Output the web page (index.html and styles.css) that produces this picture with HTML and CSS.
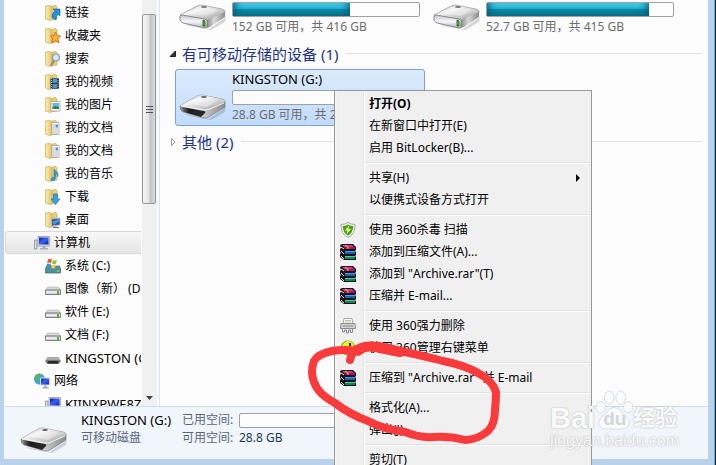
FILE: index.html
```html
<!DOCTYPE html>
<html lang="zh-CN">
<head>
    <meta charset="UTF-8">
    <meta name="viewport" content="width=device-width, initial-scale=1.0">
    <title>计算机</title>
    <link rel="stylesheet" href="styles.css">
</head>
<body>
    <!-- icon sprites -->
    <svg class="sprites" width="0" height="0">
        <defs>
            <linearGradient id="metal" x1="0" y1="0" x2="1" y2="1">
                <stop offset="0" stop-color="#a9a9a9"/>
                <stop offset=".35" stop-color="#f4f4f4"/>
                <stop offset=".6" stop-color="#d2d2d2"/>
                <stop offset="1" stop-color="#9b9b9b"/>
            </linearGradient>
            <linearGradient id="side" x1="0" y1="0" x2="1" y2="0">
                <stop offset="0" stop-color="#8b8b8b"/>
                <stop offset=".4" stop-color="#d9d9d9"/>
                <stop offset="1" stop-color="#8a8a8a"/>
            </linearGradient>
            <linearGradient id="face" x1="0" y1="0" x2="0" y2="1">
                <stop offset="0" stop-color="#c4c4cc"/>
                <stop offset=".5" stop-color="#f5f5fa"/>
                <stop offset="1" stop-color="#b0b0b8"/>
            </linearGradient>
            <linearGradient id="hole" x1="0" y1="0" x2="1" y2="0">
                <stop offset="0" stop-color="#777"/>
                <stop offset=".3" stop-color="#1c1c1c"/>
                <stop offset="1" stop-color="#2c2c2c"/>
            </linearGradient>
            <linearGradient id="fold" x1="0" y1="0" x2="1" y2="0">
                <stop offset="0" stop-color="#fbf0b4"/>
                <stop offset="1" stop-color="#dfc264"/>
            </linearGradient>
            <linearGradient id="screen" x1="0" y1="0" x2="1" y2="1">
                <stop offset="0" stop-color="#0b1a9c"/>
                <stop offset=".5" stop-color="#3c62f0"/>
                <stop offset="1" stop-color="#0618a8"/>
            </linearGradient>
        </defs>

        <symbol id="drive" viewBox="0 0 48 28">
            <path d="M6 22L30 27L47 15L46 20L32 28L10 24Z" fill="#000" opacity=".15"/>
            <path d="M1 13L18 4Q20 3 23 3L43 7Q47 8 46 11L29 18L3 15Z" fill="url(#metal)" stroke="#8c8c8c" stroke-width=".6"/>
            <path d="M28 18L46 10V15L31 25L28 26Z" fill="url(#side)"/>
            <path d="M1 14Q1 13 3 13L26 17Q28 18 28 19V25Q28 26 26 26L4 21Q2 20 1 18Z" fill="url(#face)" stroke="#777" stroke-width=".8"/>
            <path d="M9 11L21 5L39 8L28 14Z" fill="#fff" opacity=".35"/>
            <ellipse cx="25" cy="5" rx="3" ry="1" fill="#777"/>
            <path d="M24 18L26 19V24L24 24Z" fill="#4fd320" stroke="#164c08" stroke-width=".8"/>
        </symbol>
        <symbol id="usb" viewBox="0 0 48 28">
            <path d="M6 22L30 27L47 15L46 20L32 28L10 24Z" fill="#000" opacity=".15"/>
            <path d="M1 14L18 4Q20 3 23 3L43 7Q47 8 46 10L46 15L30 25Q28 26 25 26L4 20Q1 19 1 14Z" fill="url(#side)" stroke="#777" stroke-width=".6"/>
            <path d="M1 14L18 4Q20 3 23 3L43 7Q47 8 46 10L31 17Q29 18 26 18Z" fill="url(#metal)"/>
            <path d="M3 15L25 19Q27 19 26 21L22 25L5 20Q3 19 3 15Z" fill="url(#hole)"/>
            <path d="M2 14L26 18Q29 18 31 17L45 11" fill="none" stroke="#fff" stroke-width="1" opacity=".8"/>
            <path d="M9 11L21 5L39 8L28 15Z" fill="#fff" opacity=".35"/>
            <ellipse cx="25" cy="5" rx="3" ry="1" fill="#666"/>
        </symbol>
        <symbol id="folder" viewBox="0 0 16 16">
            <path d="M4 1.500L11 .5L12 2V14L5 15Z" fill="#e8cf7a" stroke="#c5a452" stroke-width=".6"/>
            <path d="M.5 1L5 .5L7 2.500V14.500L5 15.500L.5 14Z" fill="url(#fold)" stroke="#cfae5c" stroke-width=".7"/>
        </symbol>
        <symbol id="f-link" viewBox="0 0 16 16">
            <use href="#folder"/>
            <path d="M8 4H15V11L13 9Q11 11 11 15Q6 13 7 10Q8 8 10 6Z" fill="#1e90e0" stroke="#1266ad" stroke-width=".6"/>
        </symbol>
        <symbol id="f-star" viewBox="0 0 16 16">
            <use href="#folder"/>
            <path d="M10.500 4L12 7.500L15.500 8L13 10.500L14 15L10.500 12.500L7 15L7.500 10.500L5.500 8L9 7.500Z" fill="#ffb52e" stroke="#e0601c" stroke-width=".9"/>
        </symbol>
        <symbol id="f-search" viewBox="0 0 16 16">
            <use href="#folder"/>
            <path d="M9 10L6 14.500" stroke="#7c8a96" stroke-width="2"/>
            <circle cx="11" cy="6.500" r="3.500" fill="#d5e9f8" stroke="#8595a5" stroke-width="1.200"/>
        </symbol>
        <symbol id="f-video" viewBox="0 0 16 16">
            <use href="#folder"/>
            <path d="M5.500 4H14V15H5.500Z" fill="#333"/>
            <path d="M7.500 4.500H12V9H7.500ZM7.500 10H12V14.500H7.500Z" fill="#4595cf"/>
            <path d="M6.500 4V15M13 4V15" stroke="#ddd" stroke-width=".8" stroke-dasharray="1 1"/>
        </symbol>
        <symbol id="f-picture" viewBox="0 0 16 16">
            <use href="#folder"/>
            <path d="M6 4.500H15V14H6Z" fill="#fff" stroke="#9a9a9a" stroke-width=".7"/>
            <path d="M7.500 6H14V12H7.500Z" fill="#62b5e5"/>
            <path d="M7.500 10L10 9L14 10V12H7.500Z" fill="#39804c"/>
        </symbol>
        <symbol id="f-doc" viewBox="0 0 16 16">
            <use href="#folder"/>
            <path d="M7 2.500H14V14.500H7Z" fill="#fff" stroke="#9a9a9a" stroke-width=".7"/>
            <path d="M8 5H10M8 7H10M8 9H13M8 11H13M8 13H13" stroke="#999" stroke-width=".7"/>
            <path d="M10.500 4.500H13V7.500H10.500Z" fill="#4c8ed8"/>
        </symbol>
        <symbol id="f-music" viewBox="0 0 16 16">
            <use href="#folder"/>
            <path d="M9 3Q10 5 12 6Q14 8 12.500 11Q13 8 10.500 7V12Q10 15 7.500 15Q5.500 14.500 6 12.500Q7 11 9 11.500Z" fill="#2a9be8" stroke="#1a6cb0" stroke-width=".5"/>
        </symbol>
        <symbol id="f-down" viewBox="0 0 16 16">
            <use href="#folder"/>
            <path d="M8.500 5H12.500V10H15L10.500 15.500L6 10H8.500Z" fill="#3aa4ea" stroke="#1b6cb4" stroke-width=".7"/>
        </symbol>
        <symbol id="f-desk" viewBox="0 0 16 16">
            <use href="#folder"/>
            <path d="M6.500 7L15 6V13L6.500 14Z" fill="#2459a6" stroke="#b7c4d4" stroke-width=".8"/>
            <path d="M7 10L14.500 6.500V9L9 13Z" fill="#74a8e0" opacity=".7"/>
            <path d="M8 15.500H14" stroke="#667" stroke-width="1"/>
        </symbol>
        <symbol id="computer" viewBox="0 0 16 16">
            <path d="M.5 5H3V14H.5Z" fill="#d8dce0" stroke="#7c848c" stroke-width=".7"/>
            <path d="M4 1.500H15.500V11H4Z" fill="#dfe3e8" stroke="#8b929a" stroke-width=".7"/>
            <path d="M5 2.500H14.500V9.500H5Z" fill="url(#screen)"/>
            <path d="M8.500 11H11.500V13H14V14.500H6V13H8.500Z" fill="#a7adb4"/>
        </symbol>
        <symbol id="network" viewBox="0 0 16 16">
            <circle cx="5.500" cy="6" r="5.500" fill="#3fa5e0"/>
            <path d="M2 2Q5 0 7 1L5 4L6 6L3 8L1 5ZM6 8L9 7L8 10L5 11.500Z" fill="#5cb848"/>
            <path d="M6.500 5H15.500V12H6.500Z" fill="url(#screen)" stroke="#d5dae2" stroke-width="1"/>
            <path d="M10 12.500H12.500V14H14.500V15.500H8.500V14H10Z" fill="#a7adb4"/>
        </symbol>
        <symbol id="disk" viewBox="0 0 16 16">
            <path d="M2.500 6H13.500L15.500 9H.5Z" fill="#d8d8d8" stroke="#aaa" stroke-width=".5"/>
            <path d="M.5 9H15.500V13.500H.5Z" fill="url(#face)" stroke="#777" stroke-width=".9"/>
            <path d="M12 10H14V13H12Z" fill="#48b81c"/>
        </symbol>
        <symbol id="disk-sys" viewBox="0 0 16 16">
            <path d="M1.500 8H14.500L15.500 11V15H.5V11Z" fill="#4e91a4" stroke="#5c6870" stroke-width=".8"/>
            <path d="M12 12H14V14H12Z" fill="#6ee02c"/>
            <path d="M3 1.500Q5 0 7 1.500L6 5Q4 4 2 5Z" fill="#ee5a28"/>
            <path d="M8 2Q10 3 12 2L11 5.500Q9 6.500 7 5.500Z" fill="#85c440"/>
            <path d="M2 6Q4 5 6 6L5 9Q3 8.500 1 9.500Z" fill="#3f8ee0"/>
            <path d="M7 6.500Q9 7.500 11 6.500L10 10Q8 11 6 9.500Z" fill="#fcc82c"/>
        </symbol>
        <symbol id="disk-usb" viewBox="0 0 16 16">
            <path d="M2.500 7H13.500L15.500 10H.5Z" fill="#aaa"/>
            <path d="M.5 10H15.500V12L13 14H3L.5 12Z" fill="#777"/>
            <path d="M3.500 11H12.500L14 13.500H2Z" fill="#292929"/>
        </symbol>
        <symbol id="shield" viewBox="0 0 16 16">
            <path d="M8 .5Q11 2.500 15 2.500Q15.500 12 8 15.500Q.5 12 1 2.500Q5 2.500 8 .5Z" fill="#f4f4f4" stroke="#8d9a90" stroke-width=".8"/>
            <path d="M8 2.500Q10.500 4 13.300 4Q13 11 8 13.800Q3 11 2.700 4Q5.500 4 8 2.500Z" fill="#45a312"/>
            <path d="M9 3.500L5 8.500H7.500L6.500 12.500L11 7H8.500Z" fill="#fbff9c"/>
        </symbol>
        <symbol id="rar" viewBox="0 0 16 16">
            <path d="M0 1L2 0H13L16 3V6L15 7L16 8V11L15 12L16 13V16H4L0 13V10L1 9L0 8V5L1 4Z" fill="#1a1216"/>
            <path d="M2 1H12L14 3H4Z" fill="#c83c88"/>
            <path d="M4 3H15V5H5Z" fill="#a01868"/>
            <path d="M5 7H15V8H5Z" fill="#48a0e4"/>
            <path d="M5 8H15V10H5Z" fill="#1464b8"/>
            <path d="M5 12H15V13H5Z" fill="#48d098"/>
            <path d="M5 13H15V15H5Z" fill="#0c8858"/>
            <path d="M1 3L4 5M1 7L4 10M1 12L4 15" stroke="#ddd"/>
            <path d="M5 1L8 3V5" stroke="#e8c830" fill="none"/>
        </symbol>
        <symbol id="shredder" viewBox="0 0 16 16">
            <path d="M4 .5H12L13 6H3Z" fill="#fff" stroke="#909090" stroke-width=".8"/>
            <path d="M5 2.500H11M5 4H11" stroke="#b8b890" stroke-width=".8"/>
            <path d="M1 5.500H15L15.500 10.500H.5Z" fill="#d5d5d5" stroke="#858585" stroke-width=".9"/>
            <path d="M3 8H13" stroke="#888"/>
            <path d="M2.500 11V14H4.500V12H6.500V15H8.500V12H10.500V14.500H12.500V11" stroke="#888" fill="none"/>
        </symbol>
        <symbol id="ball" viewBox="0 0 16 16">
            <circle cx="8" cy="8" r="7.500" fill="#5cb81c"/>
            <path d="M2 6Q4 1 9 1Q14 2 14 7Q12 11 8 8Q5 6 2 9Z" fill="#f4f01c"/>
            <path d="M10 3V6" stroke="#222" stroke-width="2"/>
        </symbol>
    </svg>

    <div class="window">
        <div class="body">
            <nav class="tree">
                <a href="#" class="node"><svg><use href="#f-link"/></svg>链接</a>
                <a href="#" class="node"><svg><use href="#f-star"/></svg>收藏夹</a>
                <a href="#" class="node"><svg><use href="#f-search"/></svg>搜索</a>
                <a href="#" class="node"><svg><use href="#f-video"/></svg>我的视频</a>
                <a href="#" class="node"><svg><use href="#f-picture"/></svg>我的图片</a>
                <a href="#" class="node"><svg><use href="#f-doc"/></svg>我的文档</a>
                <a href="#" class="node"><svg><use href="#f-doc"/></svg>我的文档</a>
                <a href="#" class="node"><svg><use href="#f-music"/></svg>我的音乐</a>
                <a href="#" class="node"><svg><use href="#f-down"/></svg>下载</a>
                <a href="#" class="node"><svg><use href="#f-desk"/></svg>桌面</a>
                <a href="#" class="node root current"><svg><use href="#computer"/></svg>计算机</a>
                <a href="#" class="node"><svg><use href="#disk-sys"/></svg>系统 (C:)</a>
                <a href="#" class="node"><svg><use href="#disk"/></svg>图像（新） (D:)</a>
                <a href="#" class="node"><svg><use href="#disk"/></svg>软件 (E:)</a>
                <a href="#" class="node"><svg><use href="#disk"/></svg>文档 (F:)</a>
                <a href="#" class="node latin"><svg><use href="#disk-usb"/></svg>KINGSTON (G:)</a>
                <a href="#" class="node root"><svg><use href="#network"/></svg>网络</a>
                <a href="#" class="node latin"><svg><use href="#computer"/></svg>KIINXPWE8ZY</a>
            </nav>
            <div class="scrollbar">
                <div class="thumb"><i></i><i></i><i></i></div>
                <svg class="arrow" viewBox="0 0 7 4"><path d="M0 0H7L3.500 4Z" fill="#444"/></svg>
            </div>

            <main class="content">
                <div class="drives">
                    <div class="drive">
                        <svg class="drive-icon"><use href="#drive"/></svg>
                        <div class="drive-info">
                            <div class="bar"><div class="fill" style="width: 63%"></div></div>
                            <div class="space">152 GB 可用，共 416 GB</div>
                        </div>
                    </div>
                    <div class="drive">
                        <svg class="drive-icon"><use href="#drive"/></svg>
                        <div class="drive-info">
                            <div class="bar"><div class="fill" style="width: 87%"></div></div>
                            <div class="space">52.7 GB 可用，共 415 GB</div>
                        </div>
                    </div>
                </div>

                <h2 class="group">
                    <svg viewBox="0 0 8 8"><path d="M6.500 1V6.500H1Z" fill="#333" stroke="#222"/></svg>
                    有可移动存储的设备 (1)
                </h2>
                <div class="drives">
                    <div class="drive selected">
                        <svg class="drive-icon"><use href="#usb"/></svg>
                        <div class="drive-info">
                            <div class="name">KINGSTON (G:)</div>
                            <div class="bar"></div>
                            <div class="space">28.8 GB 可用，共 28.8 GB</div>
                        </div>
                    </div>
                </div>

                <h2 class="group">
                    <svg viewBox="0 0 8 8"><path d="M2.500 .5L6 4L2.500 7.500Z" fill="#fff" stroke="#999"/></svg>
                    其他 (2)
                </h2>
            </main>
        </div>

        <footer class="details">
            <svg class="drive-icon"><use href="#usb"/></svg>
            <div class="summary">
                <div class="title">KINGSTON (G:)</div>
                <div class="label">可移动磁盘</div>
            </div>
            <div class="facts">
                <span class="label">已用空间:</span>
                <div class="bar"></div>
                <span class="label">可用空间:</span>
                <span>28.8 GB</span>
            </div>
        </footer>
    </div>

    <div class="menu">
        <button class="item default">打开(O)</button>
        <button class="item">在新窗口中打开(E)</button>
        <button class="item">启用 BitLocker(B)...</button>
        <hr>
        <button class="item">共享(H)<svg class="sub" viewBox="0 0 4 8"><path d="M0 0L4 4L0 8Z"/></svg></button>
        <button class="item">以便携式设备方式打开</button>
        <hr>
        <button class="item"><svg class="icon"><use href="#shield"/></svg>使用 360杀毒 扫描</button>
        <button class="item"><svg class="icon"><use href="#rar"/></svg>添加到压缩文件(A)...</button>
        <button class="item"><svg class="icon"><use href="#rar"/></svg>添加到 "Archive.rar"(T)</button>
        <button class="item"><svg class="icon"><use href="#rar"/></svg>压缩并 E-mail...</button>
        <hr>
        <button class="item"><svg class="icon"><use href="#shredder"/></svg>使用 360强力删除</button>
        <button class="item"><svg class="icon"><use href="#ball"/></svg>使用 360管理右键菜单</button>
        <hr>
        <button class="item"><svg class="icon"><use href="#rar"/></svg>压缩到 "Archive.rar" 并 E-mail</button>
        <hr>
        <button class="item">格式化(A)...</button>
        <button class="item">弹出(J)</button>
        <hr>
        <button class="item">剪切(T)</button>
    </div>

    <!-- hand-drawn circle round the format item -->
    <svg class="marker" viewBox="300 335 210 115">
        <path d="M350 360Q352 350 361 347Q375 343 400 351Q420 355 443 361Q464 365 478 373Q493 381 496 392Q496 400 495 410Q495 424 488 431Q477 440 465 440Q450 436 433 437Q420 438 405 432Q383 429 368 421Q349 414 335 403Q318 394 314 382Q310 372 314 361Q318 354 332 351Q345 349 357 351"/>
        <path class="thick" d="M358 351Q365 344 380 348L400 352"/>
    </svg>

    <div class="watermark">
        <div class="brand">
            <span>Bai</span>
            <span class="paw">
                <svg viewBox="0 0 40 42">
                    <ellipse cx="6" cy="18" rx="5" ry="6"/>
                    <ellipse cx="15" cy="8" rx="5" ry="7"/>
                    <ellipse cx="27" cy="8" rx="5" ry="7"/>
                    <ellipse cx="35" cy="18" rx="5" ry="6"/>
                    <path d="M20 18Q25 18 28 24Q36 30 36 35Q35 41 28 41H12Q5 41 4 35Q4 30 12 24Q15 18 20 18Z"/>
                </svg>
                <span class="du">du</span>
            </span>
            <span class="cn">经验</span>
        </div>
        <div class="site">jingyan.baidu.com</div>
    </div>
</body>
</html>
```
FILE: styles.css
```css
* {
    box-sizing: border-box;
}

body {
    margin: 0;
    height: 100vh;
    overflow: hidden;
    position: relative;
    background: #b9d1ea;
    font-family: "Noto Sans", "Noto Sans CJK SC", sans-serif;
    font-size: 12px;
    line-height: 22px;
    color: #000;
}

.sprites {
    position: absolute;
}

.window {
    height: 100vh;
    display: flex;
    flex-direction: column;
    padding: 0 7px 6px 4px;
    border-right: 1px solid #000;
    box-shadow: inset -1px 0 #1fd0ee;
}

.body {
    flex: 1;
    min-height: 0;
    display: flex;
    background: #fcfcfc;
}

/* navigation tree */
.tree {
    width: 137px;
    padding-top: 1px;
    overflow: hidden;
}

.node {
    display: flex;
    align-items: center;
    gap: 4px;
    height: 23px;
    margin-left: 1px;
    padding-left: 39px;
    border: 1px solid transparent;
    border-right: 0;
    color: #000;
    text-decoration: none;
    white-space: nowrap;
}

.node svg {
    width: 16px;
    height: 16px;
    flex: none;
}

.node.root {
    padding-left: 28px;
}

.node.current {
    border-color: #d9d9d9;
    border-radius: 3px 0 0 3px;
    background: linear-gradient(#f8f8f8, #e5e5e5);
}

.node.latin {
    font-size: 13px;
}

.scrollbar {
    width: 17px;
    margin-left: 1px;
    padding: 14px 1px 6px 0;
    display: flex;
    flex-direction: column;
    justify-content: space-between;
    align-items: center;
    background: #f0f0f0;
    border-right: 2px solid #fcfcfc;
}

.thumb {
    width: 100%;
    height: 190px;
    display: flex;
    flex-direction: column;
    justify-content: center;
    align-items: center;
    gap: 2px;
    border: 1px solid #979797;
    border-radius: 2px;
    background: linear-gradient(to right, #f5f5f5, #e6e6ea 45%, #c4c4c8 60%, #d8d8dc);
}

.thumb i {
    width: 7px;
    height: 1px;
    background: #555;
}

.arrow {
    width: 7px;
    height: 4px;
}

/* drives */
.content {
    flex: 1;
    min-width: 0;
    padding: 0 7px 0 10px;
    border-left: 1px solid #d6e5f5;
}

.drives {
    display: flex;
    gap: 4px;
    padding-left: 5px;
}

.drive {
    width: 250px;
    flex: none;
    display: flex;
    gap: 5px;
    padding: 1px 4px 0 3px;
    border: 1px solid transparent;
}

.drive.selected {
    border-color: #7da2ce;
    border-radius: 3px;
    background: linear-gradient(#dcebfc, #c1dbfc);
    padding-top: 0;
}

.selected .drive-icon {
    margin-top: 22px;
}

.drive-icon {
    width: 48px;
    height: 28px;
    flex: none;
}

.drive-info {
    flex: 1;
}

.name {
    height: 20px;
    font-size: 13px;
    line-height: 18px;
}

.bar {
    height: 15px;
    border: 1px solid #a0a0a0;
    border-radius: 2px;
    background: #fcfcfc;
}

.fill {
    height: 100%;
    background: linear-gradient(#45c8e6, #22b4d6 45%, #0a91ae 50%, #0991ae 70%, #12a0bd);
    box-shadow: inset 8px -6px 8px -6px #065a72, inset -8px -6px 8px -6px #065a72;
}

.space {
    height: 20px;
    line-height: 20px;
    color: #6d6d6d;
}

.group {
    display: flex;
    align-items: center;
    gap: 5px;
    height: 31px;
    margin: 0;
    font-size: 15px;
    font-weight: normal;
    line-height: 20px;
    color: #1e3287;
}

.group svg {
    width: 8px;
    height: 8px;
    margin-left: -1px;
}

.group::after {
    content: "";
    flex: 1;
    height: 1px;
    margin-left: 3px;
    background: #e0e0e0;
}

/* details pane */
.details {
    height: 53px;
    display: flex;
    padding: 2px 0 0 16px;
    border-top: 1px solid #cbdcef;
    background: #f1f5fc;
    line-height: 18px;
}

.details .drive-icon {
    margin-top: 16px;
}

.summary {
    width: 101px;
    margin-left: 13px;
    padding-top: 2px;
    white-space: nowrap;
}

.title {
    font-size: 13px;
}

.label {
    color: #5a6779;
}

.facts {
    display: grid;
    grid-template-columns: 50px 188px;
    column-gap: 7px;
    align-content: start;
    padding-top: 2px;
    color: #1e395b;
    white-space: nowrap;
}

.facts .bar {
    margin-top: 2px;
}

/* context menu */
.menu {
    position: absolute;
    left: 334px;
    top: 90px;
    width: 258px;
    padding: 2px;
    border: 1px solid #979797;
    background: linear-gradient(to right, #f5f5f5 2px, #f0f0f0 2px, #f0f0f0 28px, #e2e3e3 28px, #e2e3e3 29px, #fff 29px, #fff 30px, #f0f0f0 30px);
}

.item {
    display: flex;
    align-items: center;
    width: 100%;
    height: 22px;
    padding: 0 9px 0 32px;
    border: 0;
    background: none;
    font: inherit;
    color: #000;
    text-align: left;
    white-space: pre;
}

.item.default {
    font-weight: bold;
}

.icon {
    width: 16px;
    height: 16px;
    margin: 0 13px 0 -29px;
}

.sub {
    width: 4px;
    height: 8px;
    margin-left: auto;
}

.menu hr {
    height: 2px;
    margin: 3px 0 3px 28px;
    border: 0;
    border-top: 1px solid #e0e0e0;
    border-bottom: 1px solid #fff;
}

.marker {
    position: absolute;
    left: 300px;
    top: 335px;
    width: 210px;
    height: 115px;
    pointer-events: none;
}

.marker path {
    fill: none;
    stroke: #fb3b3b;
    stroke-width: 8;
    stroke-linecap: round;
    stroke-linejoin: round;
}

.marker .thick {
    stroke-width: 10;
}

.watermark {
    position: absolute;
    right: 24px;
    bottom: 14px;
    width: 142px;
    color: #fafafa;
    font-family: "Liberation Sans", "Noto Sans CJK SC", sans-serif;
    text-shadow: 0 0 2px #bbb, 0 0 1px #ccc;
    pointer-events: none;
}

.brand {
    display: flex;
    align-items: flex-end;
    height: 42px;
    font-size: 29px;
    font-weight: bold;
    line-height: 26px;
}

.paw {
    position: relative;
    width: 38px;
    height: 42px;
}

.paw svg {
    width: 38px;
    height: 42px;
    fill: #fafbfd;
    stroke: #d8dade;
}

.du {
    position: absolute;
    left: 8px;
    bottom: 2px;
    font-size: 19px;
    line-height: 20px;
    color: #d4d6da;
    text-shadow: none;
}

.cn {
    font-size: 22px;
}

.site {
    font-size: 16px;
    line-height: 20px;
}
```
